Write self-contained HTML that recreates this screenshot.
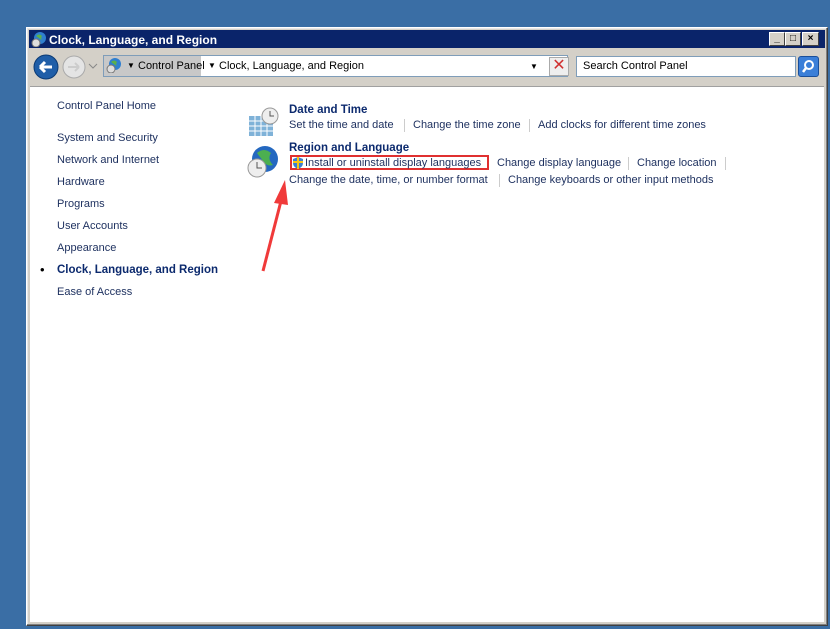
<!DOCTYPE html>
<html><head><meta charset="utf-8"><style>
*{margin:0;padding:0;box-sizing:border-box}
body{width:830px;height:629px;background:#3a6ea5;position:relative;overflow:hidden;font-family:"Liberation Sans",sans-serif;font-size:11px;color:#1c2f5e;line-height:16px}
.a{position:absolute;white-space:nowrap}
#win{position:absolute;left:26px;top:27px;width:802px;height:599px;background:#d4d0c8;border:1px solid #fff;border-right-color:#404040;border-bottom-color:#404040;box-shadow:inset -1px -1px #808080,inset 1px 1px #e8e8e8}
#title{position:absolute;left:29px;top:30px;width:796px;height:18px;background:#0a246a;color:#fff;font-weight:bold;font-size:12px;line-height:18px}
.tb{position:absolute;top:32px;width:16px;height:14px;background:#d4d0c8;border:1px solid #fff;border-right-color:#404040;border-bottom-color:#404040;color:#000;font-size:10px;text-align:center;line-height:11px;font-weight:bold}
#content{position:absolute;left:30px;top:86px;width:794px;height:536px;background:#fff;border-top:1px solid #a0a0a0}
.sep{position:absolute;width:1px;height:13px;background:#ccc}
.h{font-weight:bold;color:#0c2a6e;font-size:11.5px}
</style></head><body>
<div id="win"></div>
<div id="title"><span class="a" style="left:20px;top:1px">Clock, Language, and Region</span>
<svg class="a" style="left:2px;top:1px" width="16" height="16"><circle cx="9" cy="7" r="6" fill="#2f7fd0"/><path d="M5 5q3-3 6 0q-2 3 1 5" fill="#5cb04a"/><circle cx="5" cy="12" r="4" fill="#ddd" stroke="#777"/></svg></div>
<div class="tb" style="left:769px">_</div><div class="tb" style="left:785px">□</div><div class="tb" style="left:802px;width:17px">×</div>
<svg class="a" style="left:32px;top:53px" width="70" height="30"><circle cx="14" cy="14" r="12" fill="#1f5ea8" stroke="#0b3a74"/><path d="M8 14h12M8 14l5-5M8 14l5 5" stroke="#fff" stroke-width="3" fill="none"/><circle cx="42" cy="14" r="11" fill="#e4e4e4" stroke="#aaa"/><path d="M36 14h11M47 14l-4-4M47 14l-4 4" stroke="#ccc" stroke-width="2" fill="none"/><path d="M57 11l4 4 4-4" stroke="#888" fill="none"/></svg>
<div class="a" style="left:103px;top:55px;width:465px;height:22px;background:#fff;border:1px solid #7f9db9"></div>
<div class="a" style="left:104px;top:56px;width:97px;height:20px;background:#c8c8c8"></div>
<svg class="a" style="left:106px;top:57px" width="16" height="16"><circle cx="9" cy="7" r="6" fill="#2f7fd0"/><path d="M5 5q3-3 6 0q-2 3 1 5" fill="#5cb04a"/><circle cx="5" cy="12" r="4" fill="#ddd" stroke="#777"/></svg>
<div class="a" style="left:127px;top:58px;font-size:8px;color:#000">▼</div>
<div class="a" style="left:138px;top:58px;color:#000">Control Panel</div>
<div class="a" style="left:208px;top:58px;font-size:8px;color:#000">▼</div>
<div class="a" style="left:219px;top:58px;color:#000">Clock, Language, and Region</div>
<div class="a" style="left:530px;top:59px;font-size:8px;color:#000">▼</div>
<div class="a" style="left:549px;top:57px;width:20px;height:19px;background:#eee;border:1px solid #aaa;color:#d03030;font-size:16px;line-height:16px;text-align:center">✕</div>
<div class="a" style="left:576px;top:56px;width:220px;height:21px;background:#fff;border:1px solid #7f9db9;padding:1px 6px;color:#000">Search Control Panel</div>
<div class="a" style="left:798px;top:56px;width:21px;height:21px;background:#3b7fd8;border:1px solid #1a4f9a;border-radius:3px"><svg width="19" height="19"><circle cx="10" cy="8" r="4" stroke="#fff" stroke-width="2" fill="none"/><path d="M7 11l-3 4" stroke="#fff" stroke-width="2.5"/></svg></div>
<div id="content"></div>
<div class="a" style="left:57px;top:98px">Control Panel Home</div>
<div class="a" style="left:57px;top:130px">System and Security</div>
<div class="a" style="left:57px;top:152px">Network and Internet</div>
<div class="a" style="left:57px;top:174px">Hardware</div>
<div class="a" style="left:57px;top:196px">Programs</div>
<div class="a" style="left:57px;top:218px">User Accounts</div>
<div class="a" style="left:57px;top:240px">Appearance</div>
<div class="a" style="left:40px;top:262px;font-size:13px;color:#000">•</div>
<div class="a h" style="left:57px;top:262px">Clock, Language, and Region</div>
<div class="a" style="left:57px;top:284px">Ease of Access</div>
<svg class="a" style="left:247px;top:106px" width="34" height="32"><rect x="2" y="10" width="24" height="20" fill="#7fb2d8"/><path d="M2 15h24M2 20h24M2 25h24M8 10v20M14 10v20M20 10v20" stroke="#fff"/><circle cx="23" cy="10" r="8" fill="#eee" stroke="#999"/><path d="M23 5v5h4" stroke="#555" fill="none"/></svg>
<svg class="a" style="left:247px;top:143px" width="34" height="36"><circle cx="18" cy="16" r="13" fill="#2468c0"/><path d="M10 10q7-6 14 0q-4 6 2 12q-6 2-10-4z" fill="#4caf50"/><circle cx="10" cy="25" r="9" fill="#eee" stroke="#999"/><path d="M10 19v6h5" stroke="#555" fill="none"/></svg>
<div class="a h" style="left:289px;top:102px">Date and Time</div>
<div class="a" style="left:289px;top:117px">Set the time and date</div>
<div class="sep" style="left:404px;top:119px"></div>
<div class="a" style="left:413px;top:117px">Change the time zone</div>
<div class="sep" style="left:529px;top:119px"></div>
<div class="a" style="left:538px;top:117px">Add clocks for different time zones</div>
<div class="a h" style="left:289px;top:140px">Region and Language</div>
<div class="a" style="left:290px;top:155px;width:199px;height:15px;border:2px solid #e03030"></div>
<svg class="a" style="left:292px;top:157px" width="12" height="12"><path d="M6 0l5 2v4q0 4-5 6q-5-2-5-6v-4z" fill="#3a7fd0"/><path d="M6 0v12M1 5h10" stroke="#f5c518" stroke-width="2"/></svg>
<div class="a" style="left:305px;top:155px">Install or uninstall display languages</div>
<div class="a" style="left:497px;top:155px">Change display language</div>
<div class="sep" style="left:628px;top:157px"></div>
<div class="a" style="left:637px;top:155px">Change location</div>
<div class="sep" style="left:725px;top:157px"></div>
<div class="a" style="left:289px;top:172px">Change the date, time, or number format</div>
<div class="sep" style="left:499px;top:174px"></div>
<div class="a" style="left:508px;top:172px">Change keyboards or other input methods</div>
<svg class="a" style="left:255px;top:175px" width="40" height="100"><path d="M8 96L26 26" stroke="#f03a3a" stroke-width="3"/><path d="M30 5L19 28L33 30Z" fill="#f03a3a"/></svg>
</body></html>
